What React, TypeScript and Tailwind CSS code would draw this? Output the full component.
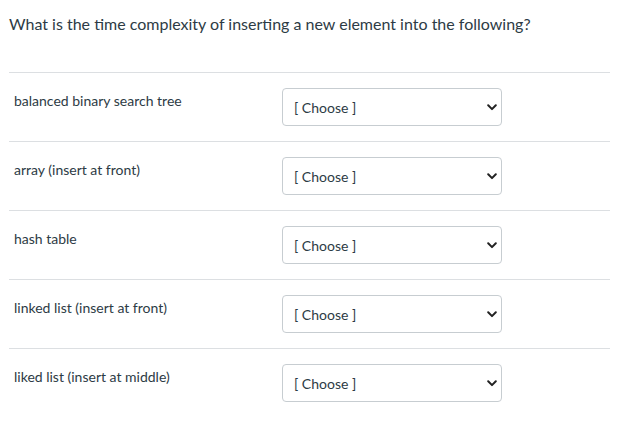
const rows = [
  "balanced binary search tree",
  "array (insert at front)",
  "hash table",
  "linked list (insert at front)",
  "liked list (insert at middle)",
];

const ChooseSelect = () => {
  return (
    <div className="relative w-[220px] h-[38px]">
      <select
        defaultValue=""
        className="appearance-none w-full h-full rounded-[4px] border border-[#c7cdd1] bg-white pl-[11px] pr-8 pt-[1px] text-[14px] text-[#2d3b45] outline-none"
        style={{ fontFamily: "Lato, 'Noto Sans', sans-serif" }}
      >
        <option value="">[ Choose ]</option>
      </select>
      <svg
        className="pointer-events-none absolute right-[5px] top-[16px]"
        width="10"
        height="7"
        viewBox="0 0 10 7"
        fill="none"
      >
        <path d="M1.2 1.3 L5 5.1 L8.8 1.3" stroke="#222" strokeWidth="2" strokeLinecap="round" strokeLinejoin="round" />
      </svg>
    </div>
  );
};

const App = () => {
  return (
    <div
      className="min-h-[425px] bg-white px-[9px] text-[#2d3b45]"
      style={{ fontFamily: "Lato, 'Noto Sans', sans-serif" }}
    >
      {/* Question */}
      <p className="pt-[12px] text-[16px] leading-[24px]">
        What is the time complexity of inserting a new element into the following?
      </p>

      {/* Matching rows */}
      <div className="mt-[36px]">
        {rows.map((label) => (
          <div key={label} className="flex border-t border-[#dcdfe2] py-[15px]">
            <div className="w-[273px] shrink-0 pl-[5px] pt-[3px] text-[14px] leading-[20px]">{label}</div>
            <ChooseSelect />
          </div>
        ))}
      </div>
    </div>
  );
};

export default App;
